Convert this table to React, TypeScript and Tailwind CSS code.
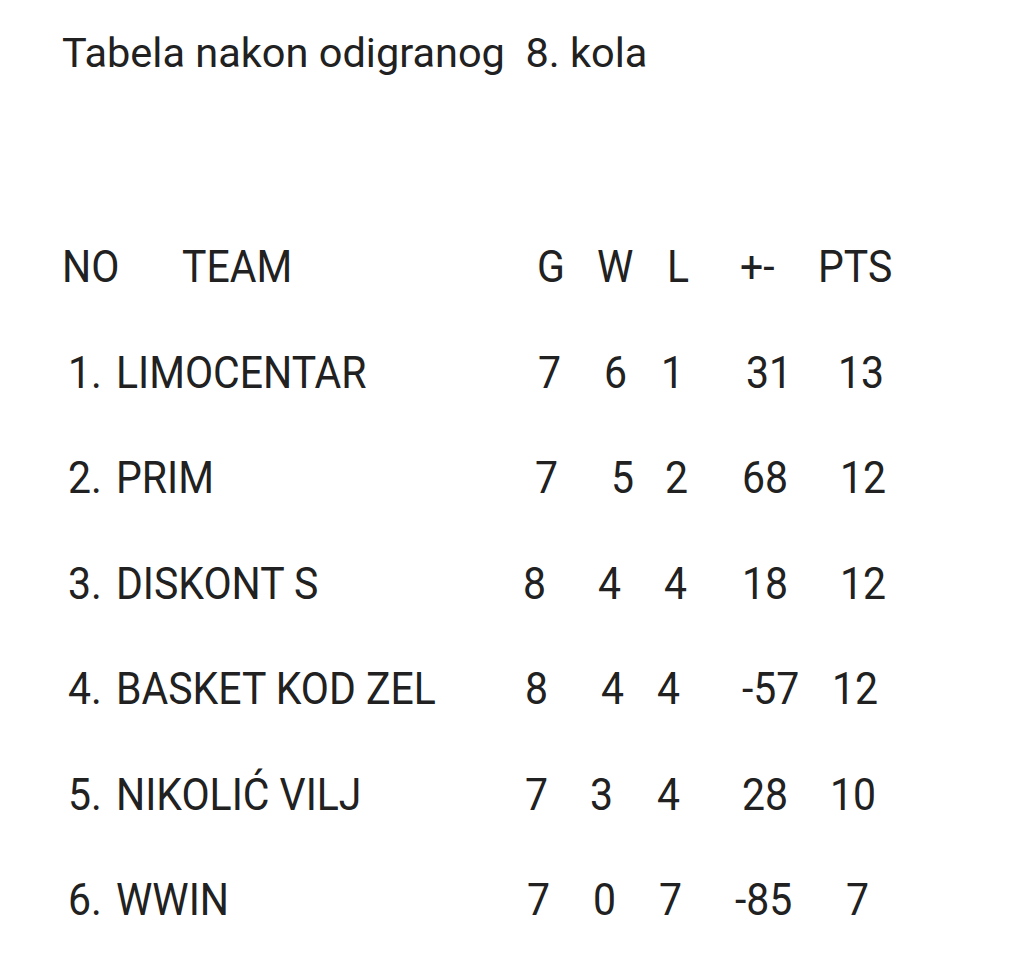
const HEAD = ["pl-[22px]", "pl-[17px]", "pl-[22px]", "pl-[20px]", "pl-[3px]"];

type Row = { no: string; team: string; cells: [string, string][] };

const ROWS: Row[] = [
  {
    no: "1.",
    team: "LIMOCENTAR",
    cells: [["7", "pl-[23px]"], ["6", "pl-[24px]"], ["1", "pl-[16px]"], ["31", "pl-[26px]"], ["13", "pl-[23px]"]],
  },
  {
    no: "2.",
    team: "PRIM",
    cells: [["7", "pl-[20px]"], ["5", "pl-[31px]"], ["2", "pl-[20px]"], ["68", "pl-[22px]"], ["12", "pl-[25px]"]],
  },
  {
    no: "3.",
    team: "DISKONT S",
    cells: [["8", "pl-[8px]"], ["4", "pl-[18px]"], ["4", "pl-[19px]"], ["18", "pl-[22px]"], ["12", "pl-[25px]"]],
  },
  {
    no: "4.",
    team: "BASKET KOD ZEL",
    cells: [["8", "pl-[10px]"], ["4", "pl-[21px]"], ["4", "pl-[12px]"], ["-57", "pl-[22px]"], ["12", "pl-[17px]"]],
  },
  {
    no: "5.",
    team: "NIKOLIĆ VILJ",
    cells: [["7", "pl-[10px]"], ["3", "pl-[10px]"], ["4", "pl-[12px]"], ["28", "pl-[22px]"], ["10", "pl-[15px]"]],
  },
  {
    no: "6.",
    team: "WWIN",
    cells: [["7", "pl-[12px]"], ["0", "pl-[13px]"], ["7", "pl-[14px]"], ["-85", "pl-[15px]"], ["7", "pl-[31px]"]],
  },
];

// column widths after the team column
const COLS = ["w-[65px]", "w-[65px]", "w-[75px]", "w-[95px]", "w-[120px]"];

function Txt({ children }: { children: React.ReactNode }) {
  return <span className="inline-block origin-left scale-x-[0.91] whitespace-pre">{children}</span>;
}

export default function App() {
  return (
    <div
      className="min-h-[961px] w-[1024px] bg-white pl-[62px] pt-[32px] text-[#212121]"
      style={{ fontFamily: "Roboto, 'Noto Sans', sans-serif" }}
    >
      {/* Title */}
      <div className="whitespace-pre text-[41.5px] leading-[42px]">Tabela nakon odigranog  8. kola</div>

      {/* Standings */}
      <div className="mt-[170px] text-[45px] leading-[45px]">
        <div className="flex h-[105.5px]">
          <div className="flex w-[453px]">
            <div className="w-[120px]">
              <Txt>NO</Txt>
            </div>
            <Txt>TEAM</Txt>
          </div>
          {["G", "W", "L", "+-", "PTS"].map((h, i) => (
            <div key={h} className={`${COLS[i]} ${HEAD[i]}`}>
              <Txt>{h}</Txt>
            </div>
          ))}
        </div>

        {ROWS.map((r) => (
          <div key={r.no} className="flex h-[105.5px]">
            <div className="flex w-[453px] pl-[6px]">
              <div className="w-[48px]">
                <Txt>{r.no}</Txt>
              </div>
              <Txt>{r.team}</Txt>
            </div>
            {r.cells.map(([v, pl], i) => (
              <div key={i} className={`${COLS[i]} ${pl}`}>
                <Txt>{v}</Txt>
              </div>
            ))}
          </div>
        ))}
      </div>
    </div>
  );
}
